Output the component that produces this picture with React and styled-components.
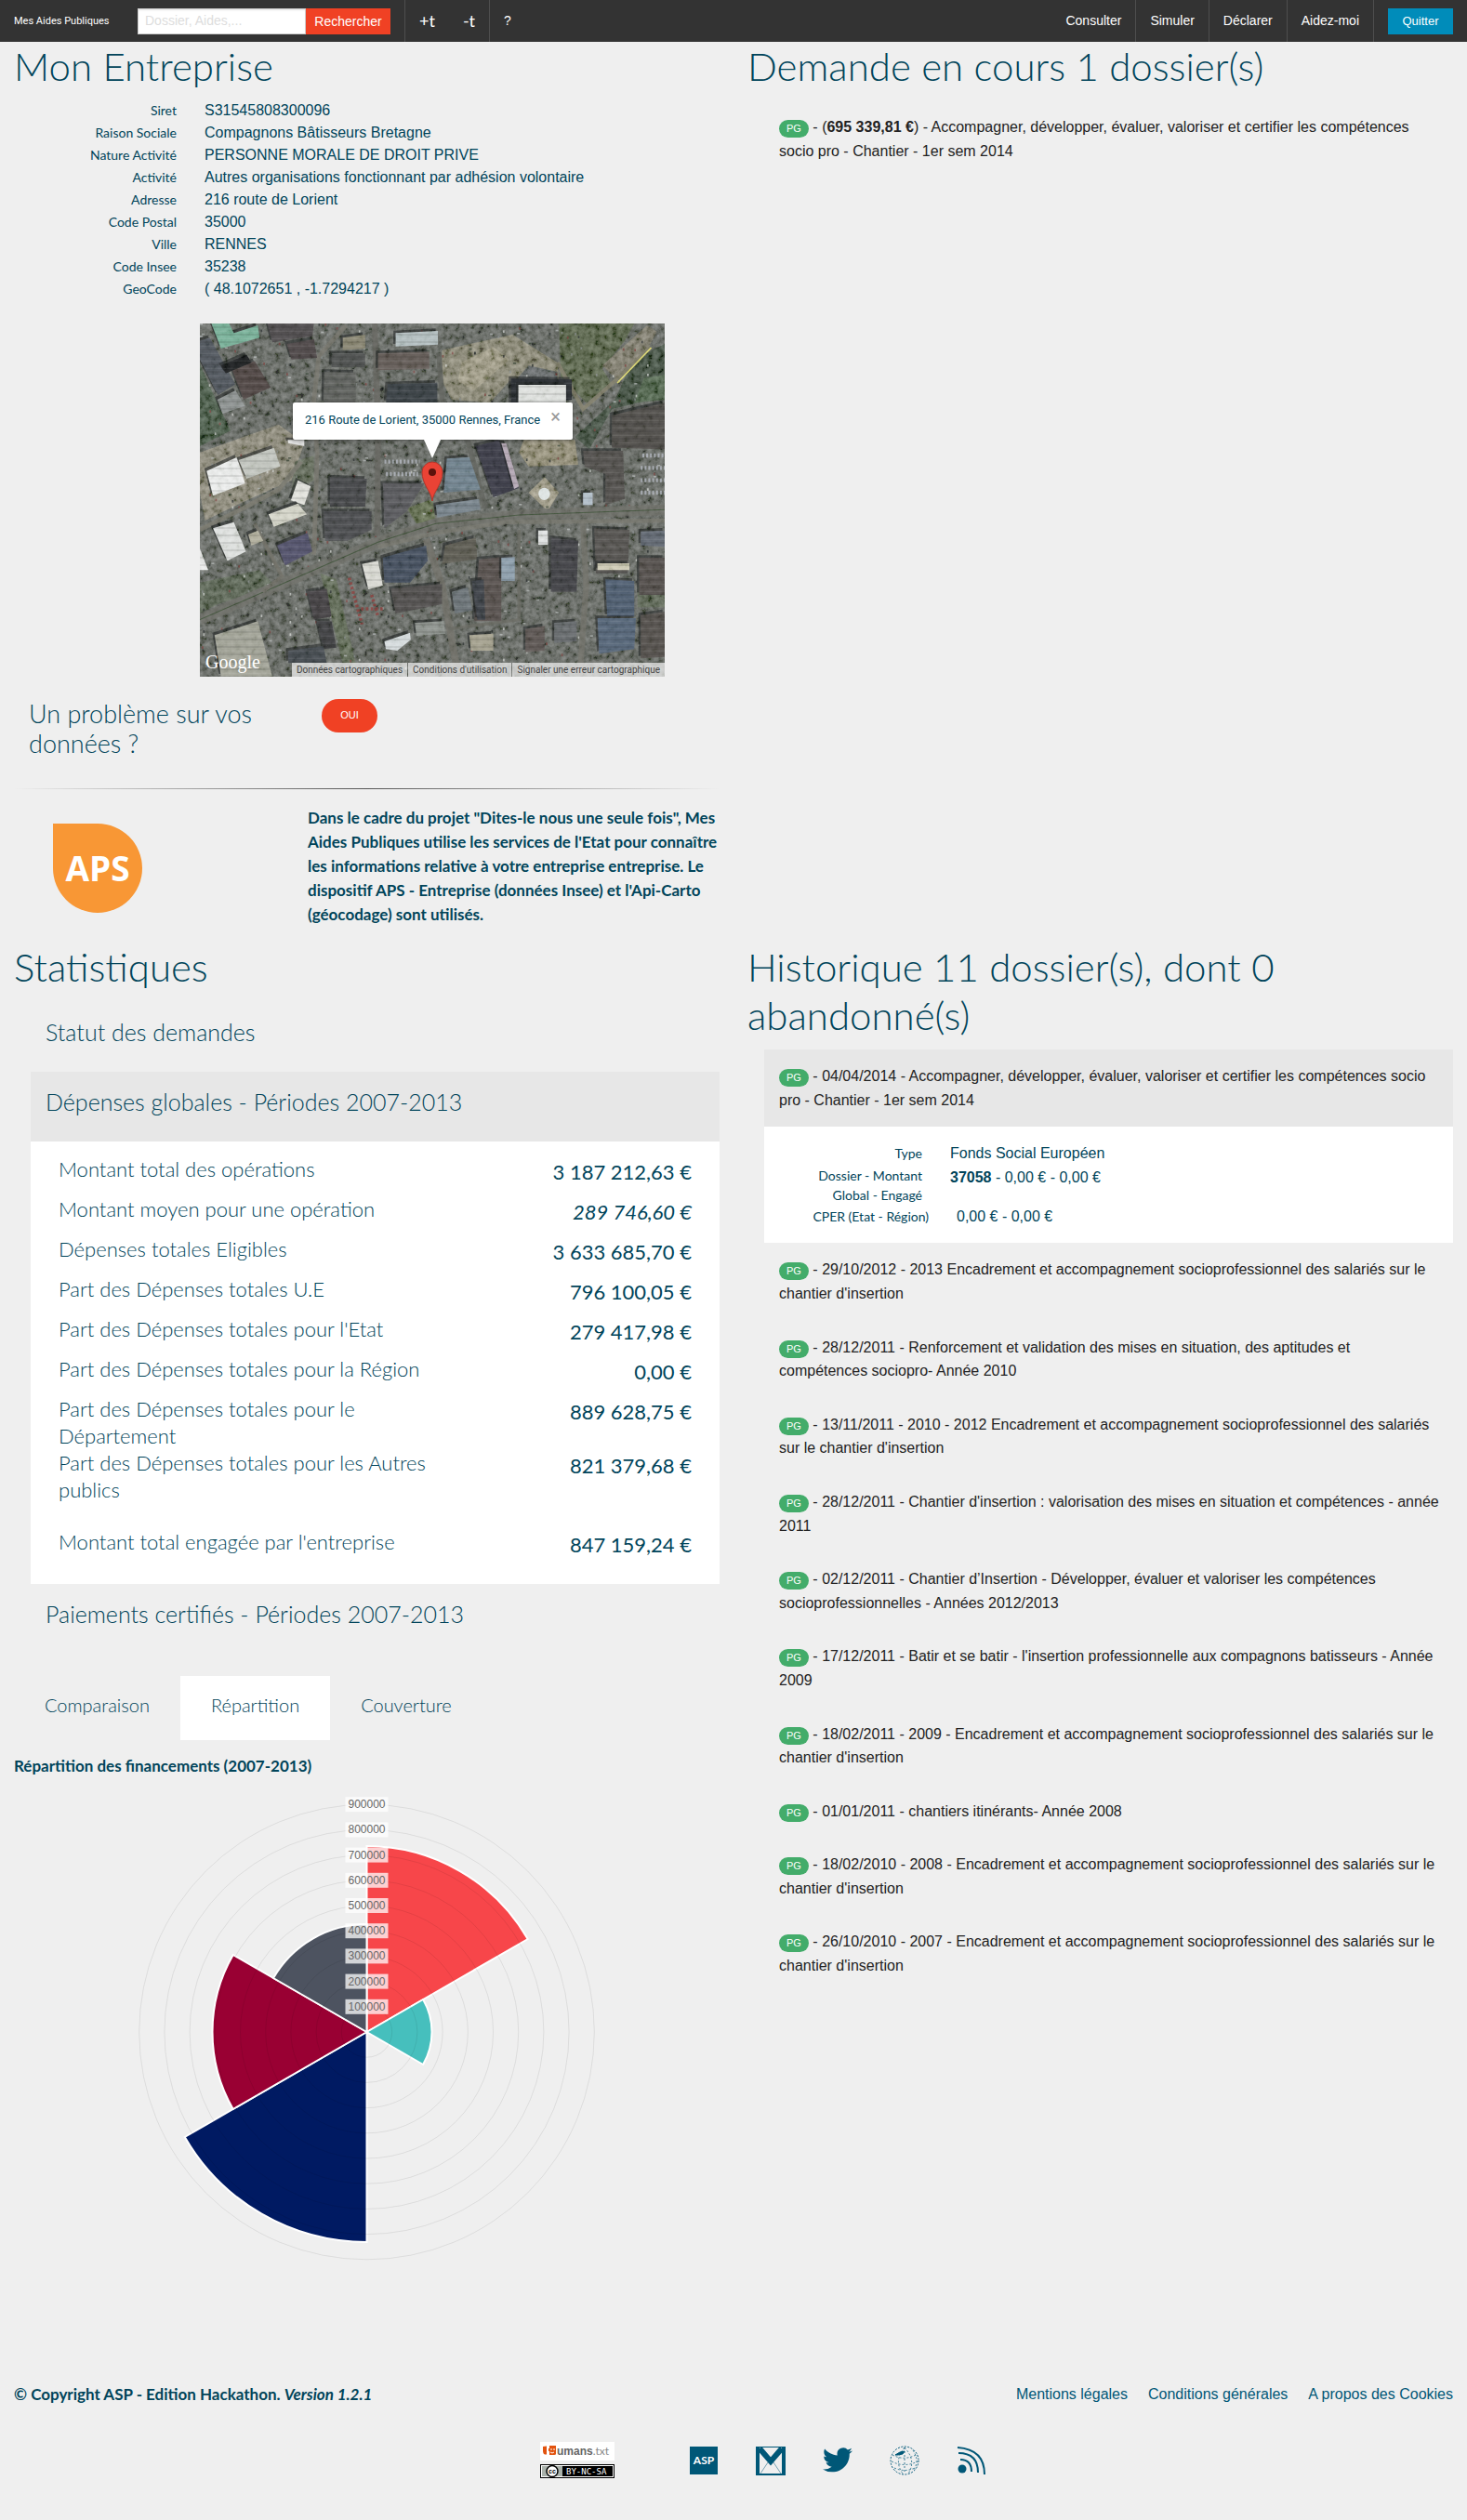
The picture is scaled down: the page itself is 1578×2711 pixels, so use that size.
import React from "react";
import styled, { createGlobalStyle, css } from "styled-components";

const ink = "#00445a";
const petrol = "#005777";
const sans = '"Liberation Sans", Arial, sans-serif';
const display = 'Lato, "Open Sans", sans-serif';

const GlobalStyle = createGlobalStyle`
  *, *::before, *::after { box-sizing: border-box; }
  body { margin: 0; background: #efefef; color: #222; font: 16px/1.6 ${sans}; }
  h2, h3, p, dl, dd, ul { margin: 0; padding: 0; }
  h2, h3 { font-weight: 300; }
  button, input { font: inherit; border: 0; border-radius: 0; }
  a { color: inherit; text-decoration: none; }
`;

/* ---------- top bar ---------- */
const TopBar = styled.header`
  display: flex; align-items: center; height: 45px; padding: 0 15px;
  background: #333; color: #fff; font-size: 12px; line-height: 45px;
`;
const Brand = styled.a`
  width: 133px; font-family: Roboto, ${sans}; font-size: 11px; white-space: nowrap;
`;
const Search = styled.form`
  display: flex; width: 272px; height: 28px; margin-right: 15px;
`;
const SearchInput = styled.input`
  flex: 1; min-width: 0; padding: 0 8px; background: #fff; font-size: 14px;
  box-shadow: inset 0 0 0 1px #ccc, inset 0 2px 2px rgba(0, 0, 0, 0.1);
  &::placeholder { color: #ddd; opacity: 1; }
`;
const SearchButton = styled.button`
  width: 91px; padding: 0; background: #f04124; color: #fff; font-size: 14px; line-height: 28px;
`;
const Nav = styled.nav`
  display: flex; height: 45px; margin-left: ${(p) => (p.$end ? "auto" : 0)};
`;
const NavGroup = styled.div`
  display: flex; border-left: ${(p) => (p.$line ? "1px solid #4e4e4e" : 0)};
`;
const NavLink = styled.a`
  padding: 0 15px; font-size: ${(p) => (p.$big ? 18 : 14)}px;
  font-family: ${(p) => (p.$big ? display : sans)};
`;
const Quit = styled.button`
  align-self: center; width: 70px; height: 28px; margin-left: 15px; padding: 0;
  background: #008cba; color: #fff; font-size: 13px; line-height: 28px;
`;

/* ---------- page ---------- */
const Columns = styled.main`
  display: grid; grid-template-columns: 1fr 1fr; align-items: start;
`;
const Section = styled.section`
  min-width: 0; padding: 0 15px 17px;
`;
const Title = styled.h2`
  padding-bottom: 3px; font-family: ${display}; font-size: 42px; line-height: 52px; color: ${ink};
`;
const Facts = styled.dl`
  display: grid; grid-template-columns: 175px 1fr; column-gap: 30px; margin-top: 7px; color: ${ink};
  line-height: 24px;
`;
const Term = styled.dt`
  text-align: right; font-family: ${display}; font-size: 14px;
`;

const MapBox = styled.figure`
  position: relative; width: 500px; height: 380px; margin: 25px 0 0 200px; overflow: hidden;
`;
const MapBubble = styled.div`
  position: absolute; left: 100px; top: 85px; width: 301px; height: 40px; padding: 0 13px;
  display: flex; justify-content: space-between; align-items: flex-start;
  background: #fff; border-radius: 2px; box-shadow: 0 1px 4px rgba(0, 0, 0, 0.4);
  color: ${ink}; font: 13px/38px Roboto, sans-serif;
  &::after {
    content: ""; position: absolute; left: 141px; top: 40px;
    border: solid transparent; border-width: 20px 9px 0; border-top-color: #fff;
  }
`;
const BubbleClose = styled.button`
  padding: 0; background: none; color: #999; font: 20px/30px Roboto, sans-serif;
`;
const MapBrand = styled.span`
  position: absolute; left: 6px; bottom: 2px; color: #fff; font: 20px/28px "Liberation Serif", serif;
`;
const MapLegal = styled.div`
  position: absolute; right: 0; bottom: 0; display: flex; gap: 1px; color: #444;
  font: 10px/15px Roboto, sans-serif;
`;
const LegalLink = styled.a`
  padding: 0 5px; background: rgba(245, 245, 245, 0.7);
`;

const Problem = styled.div`
  display: flex; align-items: flex-start; padding: 24px 16px 0; min-height: 120px;
`;
const ProblemText = styled.h3`
  width: 315px; padding: 0 60px 0 0; font-family: ${display}; font-size: 27px; line-height: 32px; color: ${ink};
`;
const Yes = styled.button`
  width: 60px; height: 36px; padding: 0; border-radius: 18px; background: #f04124; color: #fff; font-size: 11px;
`;
const Rule = styled.hr`
  height: 1px; margin: 0; border: 0;
  background: linear-gradient(to right, transparent, #555, transparent);
`;
const Notice = styled.div`
  display: grid; grid-template-columns: 96px 1fr; column-gap: 178px; padding: 18px 0 0 42px;
`;
const ApsLogo = styled.div`
  display: flex; align-items: center; justify-content: center; width: 96px; height: 96px; margin-top: 19px;
  border-radius: 0 50% 50% 50%; background: #f89735; color: #fff;
  font: 700 37px/96px "Open Sans", sans-serif;
`;
const NoticeText = styled.p`
  font-family: ${display}; font-weight: 700; font-size: 17px; line-height: 26px; color: ${ink};
`;

/* ---------- accordions ---------- */
const Accordion = styled.div`
  margin-left: 18px; margin-top: ${(p) => p.$top || 0}px;
`;
const StatHeader = styled.button`
  display: block; width: 100%; padding: 16px 16px 27px; text-align: left;
  background: ${(p) => (p.$open ? "#e7e7e7" : "transparent")};
  font-family: ${display}; font-size: 25px; line-height: 32px; font-weight: 300; color: ${ink};
`;
const StatPanel = styled.div`
  padding: 15px 30px 17px; background: #fff;
`;
const Amounts = styled.table`
  width: 100%; border-collapse: collapse; color: ${ink}; font-family: ${display}; font-weight: 300;
`;
const AmountLabel = styled.th`
  width: 420px; padding: 0; text-align: left; vertical-align: top; font-weight: 300; font-size: 22px; line-height: 29px;
`;
const AmountValue = styled.td`
  padding: 0; text-align: right; vertical-align: top; white-space: nowrap;
  font-size: 22px; line-height: 36px; font-weight: 400; font-style: ${(p) => (p.$italic ? "italic" : "normal")};
`;
const AmountRow = styled.tr`
  height: ${(p) => (p.$tall ? 58 : 43)}px;
  ${(p) => p.$last && css`
    height: 70px;
    && > * { padding-top: 27px; }
  `}
`;

const ItemHeader = styled.button`
  display: block; width: 100%; padding: 16px 13px 16px 16px; text-align: left; color: #222; line-height: 1.6;
  background: ${(p) => (p.$open ? "#e7e7e7" : "transparent")};
`;
const Badge = styled.span`
  display: inline-block; padding: 4px 8px; border-radius: 10px; background: #43ac6a; color: #fff;
  font-size: 11px; line-height: 11px;
`;
const ItemPanel = styled.div`
  padding: 16px; background: #fff; color: ${ink};
`;
const Detail = styled.dl`
  display: grid; grid-template-columns: ${(p) => (p.$wide ? 161 : 154)}px 1fr; column-gap: 30px;
`;
const DetailTerm = styled.dt`
  text-align: right; font-family: ${display}; font-size: 14px; line-height: 21px; padding: 2px 0 0 20px;
  & + dd + & { padding-top: 0; }
`;

/* ---------- tabs and chart ---------- */
const Tabs = styled.div`
  display: flex; margin-top: 24px;
`;
const Tab = styled.button`
  padding: 0 33px 7px; height: 69px; background: ${(p) => (p.$active ? "#fff" : "transparent")};
  font-family: ${display}; font-size: 20px; font-weight: 300; color: ${ink};
`;
const ChartTitle = styled.p`
  margin-top: 15px; font-family: ${display}; font-weight: 700; font-size: 17px; line-height: 26px; color: ${ink};
`;
const Chart = styled.svg`
  display: block; width: 100%; height: 520px; margin-top: 13px;
  font: 12px ${sans};
`;

/* ---------- footer ---------- */
const Footer = styled.footer`
  padding: 0 15px 45px; margin-top: 100px;
`;
const FooterLine = styled.div`
  display: flex; justify-content: space-between; color: ${ink}; line-height: 26px;
`;
const Copyright = styled.p`
  font-family: ${display}; font-weight: 700; font-size: 17px;
`;
const FooterLinks = styled.nav`
  display: flex; gap: 22px; color: ${petrol};
`;
const Marks = styled.div`
  display: flex; justify-content: center; align-items: center; margin-top: 38px; padding-left: 64px;
`;
const Licences = styled.div`
  display: flex; flex-direction: column; gap: 4px; margin-right: 80px;
`;
const Social = styled.div`
  display: flex; gap: 40px;
`;
const SvgBlock = styled.svg`
  display: block;
`;

const facts = [
  ["Siret", "S31545808300096"],
  ["Raison Sociale", "Compagnons Bâtisseurs Bretagne"],
  ["Nature Activité", "PERSONNE MORALE DE DROIT PRIVE"],
  ["Activité", "Autres organisations fonctionnant par adhésion volontaire"],
  ["Adresse", "216 route de Lorient"],
  ["Code Postal", "35000"],
  ["Ville", "RENNES"],
  ["Code Insee", "35238"],
  ["GeoCode", "( 48.1072651 , -1.7294217 )"],
];

const amounts = [
  { label: "Montant total des opérations", value: "3 187 212,63 €" },
  { label: "Montant moyen pour une opération", value: "289 746,60 €", italic: true },
  { label: "Dépenses totales Eligibles", value: "3 633 685,70 €" },
  { label: "Part des Dépenses totales U.E", value: "796 100,05 €" },
  { label: "Part des Dépenses totales pour l'Etat", value: "279 417,98 €" },
  { label: "Part des Dépenses totales pour la Région", value: "0,00 €" },
  { label: "Part des Dépenses totales pour le Département", value: "889 628,75 €", tall: true },
  { label: "Part des Dépenses totales pour les Autres publics", value: "821 379,68 €", tall: true },
  { label: "Montant total engagée par l'entreprise", value: "847 159,24 €", last: true },
];

const history = [
  "29/10/2012 - 2013 Encadrement et accompagnement socioprofessionnel des salariés sur le chantier d'insertion",
  "28/12/2011 - Renforcement et validation des mises en situation, des aptitudes et compétences sociopro- Année 2010",
  "13/11/2011 - 2010 - 2012 Encadrement et accompagnement socioprofessionnel des salariés sur le chantier d'insertion",
  "28/12/2011 - Chantier d'insertion : valorisation des mises en situation et compétences - année 2011",
  "02/12/2011 - Chantier d’Insertion - Développer, évaluer et valoriser les compétences socioprofessionnelles - Années 2012/2013",
  "17/12/2011 - Batir et se batir - l'insertion professionnelle aux compagnons batisseurs - Année 2009",
  "18/02/2011 - 2009 - Encadrement et accompagnement socioprofessionnel des salariés sur le chantier d'insertion",
  "01/01/2011 - chantiers itinérants- Année 2008",
  "18/02/2010 - 2008 - Encadrement et accompagnement socioprofessionnel des salariés sur le chantier d'insertion",
  "26/10/2010 - 2007 - Encadrement et accompagnement socioprofessionnel des salariés sur le chantier d'insertion",
];

/* Polar chart: six sectors of 60°, the third one is empty. */
const sectors = [
  { r: 200, color: "#f7464a" },
  { r: 70, color: "#46bfbd" },
  { r: 0, color: "none" },
  { r: 226, color: "#001a62" },
  { r: 166, color: "#990033" },
  { r: 116, color: "#4d5360" },
];
const point = (r, deg) => {
  const a = ((deg - 90) * Math.PI) / 180;
  return `${(r * Math.cos(a)).toFixed(2)} ${(r * Math.sin(a)).toFixed(2)}`;
};

function PolarChart() {
  const rings = [1, 2, 3, 4, 5, 6, 7, 8, 9];
  return (
    <Chart viewBox="-260 -260 520 520" role="img" aria-label="Répartition des financements">
      {sectors.map((s, i) => (
        <path
          key={i}
          d={`M0 0L${point(s.r, i * 60)}A${s.r} ${s.r} 0 0 1 ${point(s.r, i * 60 + 60)}Z`}
          fill={s.color}
          stroke="#fff"
          strokeWidth="2"
        />
      ))}
      {rings.map((n) => (
        <circle key={n} r={n * 27.2} fill="none" stroke="#000" strokeOpacity=".08" />
      ))}
      {rings.map((n) => (
        <g key={n}>
          <rect x="-23" y={-n * 27.2 - 8} width="46" height="16" fill="#fff" fillOpacity=".75" />
          <text y={-n * 27.2 + 4} textAnchor="middle" fill="#666">{n * 100000}</text>
        </g>
      ))}
    </Chart>
  );
}

/* Aerial view: [points, fill] in drawing units. */
const land = [
  ["44,185 90,290 140,400 44,450", "#28402a"],
  ["1165,54 1400,54 1370,110 1300,200 1330,250 1250,310 1170,225", "#3f4d2c"],
  ["800,140 1020,90 1160,180 1165,240 1010,240 950,310 830,300 795,230", "#86806a"],
  ["860,180 960,130 1010,170 900,270 850,240", "#a39a80"],
  ["1395,170 1495,120 1495,290 1330,330 1260,460 1215,420 1340,300", "#1d2f1f"],
  ["1430,230 1495,220 1495,300 1400,310", "#2e4a2b"],
  ["1055,430 1215,430 1225,510 1070,515 1040,470", "#93896d"],
  ["1300,190 1440,60 1470,80 1440,140 1345,235", "#77705f"],
  ["1070,600 1120,550 1165,600 1130,660", "#a39a82"],
  ["44,470 290,380 370,440 330,560 200,620 60,690 44,600", "#8a8371"],
  ["420,860 470,880 530,1150 490,1150", "#46533a"],
  ["1410,900 1495,900 1495,970 1410,970", "#3f4b36"],
  ["340,500 400,480 400,560 330,600", "#4a5440"],
  ["690,650 770,620 780,690 720,700", "#4c5a33"],
  ["44,890 230,850 280,900 100,960 44,990", "#3d4a36"],
  ["1070,190 1160,210 1160,240 1010,260", "#50545a"],
];
const buildings = [
  ["80,54 110,135 230,100 225,60 150,85 135,54", "#78b59c"],
  ["44,110 75,100 155,250 100,285 44,170", "#4d535c"],
  ["255,54 400,54 395,95 270,115", "#4b474a"],
  ["315,120 400,105 410,165 330,170", "#4a4244"],
  ["145,205 215,175 265,260 180,300", "#4c4140"],
  ["98,300 155,270 185,320 115,345", "#8f9494"],
  ["110,190 190,155 205,180 125,215", "#15171a"],
  ["490,100 560,90 560,135 490,140", "#8a8672"],
  ["655,85 787,78 787,122 655,128", "#b8c4c7"],
  ["455,150 560,150 560,195 455,195", "#4a4c4c"],
  ["600,150 760,145 760,200 600,205", "#5f5652"],
  ["432,210 530,212 530,310 430,310", "#5b5d5a"],
  ["630,250 785,245 785,310 625,310", "#333a40"],
  ["1015,232 1205,235 1205,300 1015,330", "#20242a"],
  ["1038,252 1187,252 1187,320 1038,320", "#e6e8e6"],
  ["65,530 160,485 185,570 85,610", "#f4f5f5"],
  ["165,495 275,455 295,515 190,555", "#c8cbc5"],
  ["318,430 370,430 370,450 320,440", "#e8e8e8"],
  ["350,560 390,580 370,640 328,625", "#e9e9e4"],
  ["258,670 350,635 378,670 275,710", "#dcdcd0"],
  ["85,715 150,695 188,790 130,820", "#e7e9e8"],
  ["44,780 70,850 44,850", "#f2f2f2"],
  ["285,770 380,730 395,790 310,835", "#4e4d6a"],
  ["195,735 225,722 242,755 205,770", "#b9b6a4"],
  ["450,550 565,555 560,645 450,645", "#414246"],
  ["430,660 580,660 580,720 505,755 435,755", "#47484c"],
  ["615,570 745,570 690,660 620,715", "#55555a"],
  ["815,490 885,485 920,590 805,600", "#6f8290"],
  ["780,640 915,620 920,655 785,680", "#77838d"],
  ["905,450 980,430 1040,585 960,615", "#353543"],
  ["985,440 1000,440 1040,580 1025,588", "#b9abba"],
  ["1330,350 1495,310 1495,460 1330,455", "#4b4845"],
  ["1240,465 1365,465 1370,620 1310,640 1310,540 1245,515", "#4f4c4a"],
  ["1240,600 1270,600 1270,640 1240,640", "#b6c3d0"],
  ["550,830 600,820 615,900 570,912", "#e2e2dc"],
  ["615,810 750,770 755,820 700,890 620,890", "#3f4a5c"],
  ["810,770 905,745 910,815 800,830", "#5a584f"],
  ["915,815 985,808 985,1015 900,1015", "#544c4a"],
  ["985,810 1027,808 1027,885 985,885", "#8ea0b0"],
  ["893,885 930,880 935,1010 910,1010", "#383c44"],
  ["1100,722 1130,722 1130,768 1100,768", "#e8eaea"],
  ["1140,745 1225,755 1220,920 1140,920", "#3c3c42"],
  ["1275,715 1385,720 1380,860 1280,860", "#514e4c"],
  ["1285,828 1385,828 1385,850 1285,850", "#d6d2bc"],
  ["1415,810 1495,810 1495,930 1415,930", "#514b49"],
  ["1420,725 1495,722 1495,775 1420,770", "#5f6672"],
  ["1310,880 1400,885 1400,1000 1315,1000", "#4a5a70"],
  ["1285,1005 1405,1005 1400,1105 1290,1120", "#516278"],
  ["640,910 800,895 800,960 655,990", "#4d4a4a"],
  ["830,920 880,905 895,980 840,990", "#6a7278"],
  ["715,1020 805,1015 810,1055 720,1062", "#8f9490"],
  ["620,1080 700,1052 702,1075 660,1110 625,1105", "#dde3e6"],
  ["90,1060 225,1015 270,1193 110,1193", "#a5a69a"],
  ["380,920 440,910 455,1000 400,1010", "#403c40"],
  ["410,1015 455,1015 470,1100 430,1105", "#3a3a3e"],
  ["320,1110 430,1095 440,1150 320,1150", "#3f454c"],
  ["1150,1020 1220,1015 1220,1080 1150,1085", "#666a6e"],
  ["1060,1040 1120,1030 1120,1110 1060,1115", "#5a5250"],
  ["885,1060 960,1055 960,1110 890,1110", "#a8a491"],
  ["1420,995 1495,985 1495,1130 1420,1135", "#504b48"],
];
const roads = [
  ["M44 1010L300 895L600 760L780 700L1040 672L1495 655", 34, "#6b6c66"],
  ["M44 1010L300 895L600 760L780 700L1040 672L1495 655", 3, "#3d4f37"],
  ["M600 775L780 730L1000 695L1495 690", 14, "#73736b"],
  ["M590 54L600 400L598 740", 18, "#63635e"],
  ["M500 60L415 160L400 300L410 480L400 800", 14, "#73726a"],
  ["M790 150L800 300L880 430L935 650", 16, "#5e605b"],
  ["M750 750L800 900L850 1190", 22, "#6d6c65"],
  ["M1240 700L1250 900L1230 1190", 18, "#6d6d66"],
  ["M44 720L180 650L290 590L360 500", 14, "#77766c"],
  ["M1160 180L1240 330L1345 235L1450 130", 12, "#7f7c69"],
  ["M215 700L300 870L240 920", 12, "#6e6d65"],
  ["M1040 720L1040 1010L820 1040", 10, "#65665f"],
];
const cars = Array.from({ length: 620 }, (_, i) => {
  const x = 44 + ((i * 389 + i * i * 17) % 1440);
  const y = 54 + ((i * 233 + i * i * 29) % 1130);
  return [x, y, ["#b9bdbe", "#1b2022", "#8b9092", "#2c3a2b", "#d6d8d6", "#7d3b38"][(i * 7) % 6]];
});

function Aerial() {
  return (
    <SvgBlock width="500" height="380" viewBox="0 0 500 380" aria-hidden="true">
      <defs>
        <filter id="grain" x="0" y="0" width="100%" height="100%">
          <feTurbulence type="fractalNoise" baseFrequency="0.16" numOctaves="4" seed="8" />
          <feColorMatrix values="1.2 0 0 0 -0.26  1.2 0 0 0 -0.24  1.2 0 0 0 -0.28  0 0 0 0 1" />
        </filter>
        <pattern id="ribs" width="30" height="24" patternUnits="userSpaceOnUse">
          <path d="M0 7H30" stroke="#fff" strokeOpacity=".08" strokeWidth="4" />
          <path d="M0 18H30" stroke="#000" strokeOpacity=".14" strokeWidth="4" />
        </pattern>
      </defs>
      <rect width="500" height="380" fill="#505350" />
      <g transform="scale(.3446 .3333) translate(-44 -54)">
        {land.map(([p, f]) => <polygon key={p} points={p} fill={f} />)}
      </g>
      <rect width="500" height="380" filter="url(#grain)" opacity=".3" />
      <g transform="scale(.3446 .3333) translate(-44 -54)">
        {cars.map(([x, y, f], i) => <rect key={i} x={x} y={y} width={i % 3 ? 5 : 9} height={i % 3 ? 8 : 5} fill={f} opacity=".75" />)}
        {roads.map(([d, w, c], i) => <path key={i} d={d} fill="none" stroke={c} strokeWidth={w} />)}
        {buildings.map(([p, f]) => (
          <g key={p}>
            <polygon points={p} fill="#101416" opacity=".6" transform="translate(-7 -8)" />
            <polygon points={p} fill={f} />
            <polygon points={p} fill="url(#ribs)" />
          </g>
        ))}
        <path d="M1347 246L1453 132" stroke="#e5df72" strokeWidth="5" />
        <ellipse cx="1119" cy="604" rx="18" ry="20" fill="#e7eded" />
        <path d="M615 975h-70M510 875l40 150M580 930l20 70" stroke="#863f3d" strokeWidth="10" strokeDasharray="8 7" fill="none" />
        <path d="M1425 480h70M1420 520h75M1420 560h75M1420 600h75M620 500h110M625 540h100" stroke="#a7abb3" strokeWidth="13" strokeDasharray="6 6" fill="none" />
      </g>
      <rect width="500" height="380" filter="url(#grain)" opacity=".12" />
      <path d="M250 191c-1-10-11-18-11-31a11 11 0 0 1 22 0c0 13-10 21-11 31Z" fill="#ea4335" stroke="#b3362b" />
      <circle cx="250" cy="160" r="4" fill="#5c120c" />
    </SvgBlock>
  );
}

function Item({ open, children }) {
  return (
    <ItemHeader type="button" $open={open} aria-expanded={!!open}>
      <Badge>PG</Badge> - {children}
    </ItemHeader>
  );
}

export default function App() {
  return (
    <>
      <GlobalStyle />
      <TopBar>
        <Brand href="#">Mes Aides Publiques</Brand>
        <Search onSubmit={(e) => e.preventDefault()}>
          <SearchInput type="text" aria-label="Recherche" placeholder="Dossier, Aides,..." />
          <SearchButton type="submit">Rechercher</SearchButton>
        </Search>
        <Nav>
          <NavGroup $line>
            <NavLink href="#" $big>+t</NavLink>
            <NavLink href="#" $big>-t</NavLink>
          </NavGroup>
          <NavGroup $line><NavLink href="#">?</NavLink></NavGroup>
        </Nav>
        <Nav $end>
          <NavGroup><NavLink href="#">Consulter</NavLink></NavGroup>
          <NavGroup $line><NavLink href="#">Simuler</NavLink></NavGroup>
          <NavGroup $line><NavLink href="#">Déclarer</NavLink></NavGroup>
          <NavGroup $line><NavLink href="#">Aidez-moi</NavLink></NavGroup>
          <NavGroup $line><Quit type="button">Quitter</Quit></NavGroup>
        </Nav>
      </TopBar>

      <Columns>
        <Section>
          <Title>Mon Entreprise</Title>
          <Facts>
            {facts.map(([k, v]) => (
              <React.Fragment key={k}>
                <Term>{k}</Term>
                <dd>{v}</dd>
              </React.Fragment>
            ))}
          </Facts>
          <MapBox>
            <Aerial />
            <MapBubble>
              216 Route de Lorient, 35000 Rennes, France
              <BubbleClose type="button" aria-label="Fermer">×</BubbleClose>
            </MapBubble>
            <MapBrand>Google</MapBrand>
            <MapLegal>
              <LegalLink href="#">Données cartographiques</LegalLink>
              <LegalLink href="#">Conditions d'utilisation</LegalLink>
              <LegalLink href="#">Signaler une erreur cartographique</LegalLink>
            </MapLegal>
          </MapBox>
          <Problem>
            <ProblemText>Un problème sur vos données ?</ProblemText>
            <Yes type="button">OUI</Yes>
          </Problem>
          <Rule />
          <Notice>
            <ApsLogo>APS</ApsLogo>
            <NoticeText>
              Dans le cadre du projet "Dites-le nous une seule fois", Mes Aides Publiques utilise les services de
              l'Etat pour connaître les informations relative à votre entreprise entreprise. Le dispositif APS -
              Entreprise (données Insee) et l'Api-Carto (géocodage) sont utilisés.
            </NoticeText>
          </Notice>
        </Section>

        <Section>
          <Title>Demande en cours 1 dossier(s)</Title>
          <Accordion $top={8}>
            <Item>
              (<b>695 339,81 €</b>) - Accompagner, développer, évaluer, valoriser et certifier les compétences
              socio pro - Chantier - 1er sem 2014
            </Item>
          </Accordion>
        </Section>

        <Section>
          <Title>Statistiques</Title>
          <Accordion $top={9}>
            <StatHeader type="button">Statut des demandes</StatHeader>
            <StatHeader type="button" $open aria-expanded="true">Dépenses globales - Périodes 2007-2013</StatHeader>
            <StatPanel>
              <Amounts>
                <tbody>
                  {amounts.map((a) => (
                    <AmountRow key={a.label} $tall={a.tall} $last={a.last}>
                      <AmountLabel scope="row">{a.label}</AmountLabel>
                      <AmountValue $italic={a.italic}>{a.value}</AmountValue>
                    </AmountRow>
                  ))}
                </tbody>
              </Amounts>
            </StatPanel>
            <StatHeader type="button">Paiements certifiés - Périodes 2007-2013</StatHeader>
          </Accordion>
          <Tabs role="tablist">
            <Tab type="button" role="tab">Comparaison</Tab>
            <Tab type="button" role="tab" $active aria-selected="true">Répartition</Tab>
            <Tab type="button" role="tab">Couverture</Tab>
          </Tabs>
          <ChartTitle>Répartition des financements (2007-2013)</ChartTitle>
          <PolarChart />
        </Section>

        <Section>
          <Title>Historique 11 dossier(s), dont 0 abandonné(s)</Title>
          <Accordion $top={8}>
            <Item open>
              04/04/2014 - Accompagner, développer, évaluer, valoriser et certifier les compétences socio pro -
              Chantier - 1er sem 2014
            </Item>
            <ItemPanel>
              <Detail>
                <DetailTerm>Type</DetailTerm>
                <dd>Fonds Social Européen</dd>
                <DetailTerm>Dossier - Montant Global - Engagé</DetailTerm>
                <dd><b>37058</b> - 0,00 € - 0,00 €</dd>
              </Detail>
              <Detail $wide>
                <DetailTerm>CPER (Etat - Région)</DetailTerm>
                <dd>0,00 € - 0,00 €</dd>
              </Detail>
            </ItemPanel>
            {history.map((h) => <Item key={h}>{h}</Item>)}
          </Accordion>
        </Section>
      </Columns>

      <Footer>
        <FooterLine>
          <Copyright>© Copyright ASP - Edition Hackathon. <em>Version 1.2.1</em></Copyright>
          <FooterLinks>
            <a href="#">Mentions légales</a>
            <a href="#">Conditions générales</a>
            <a href="#">A propos des Cookies</a>
          </FooterLinks>
        </FooterLine>
        <Marks>
          <Licences>
            <SvgBlock width="80" height="20" viewBox="0 0 80 20" role="img" aria-label="humans.txt">
              <rect width="80" height="20" fill="#fff" />
              <path d="M3 5l4-.5v9H5Q3 13 3 9Z" fill="#e2530f" />
              <path d="M10 4h7v9q0 1-2 1h-5v-4h-1V7h1Z" fill="#e2530f" />
              <path d="M11 8h2M14 8h2M11 11q2 2 4 0" stroke="#fff" fill="none" />
              <text x="18" y="14" fontFamily="Lato, sans-serif" fontSize="12" fill="#888">
                <tspan fontFamily={sans} fontWeight="700" fill="#666">umans</tspan>.txt
              </text>
            </SvgBlock>
            <SvgBlock width="80" height="15" viewBox="0 0 80 15" role="img" aria-label="Creative Commons BY-NC-SA">
              <rect width="80" height="15" fill="#000" />
              <rect x="1.5" y="1.5" width="77" height="12" fill="none" stroke="#fff" />
              <rect x="2" y="2" width="22" height="11" fill="#aab2ab" />
              <circle cx="13" cy="7.5" r="6" fill="#fff" stroke="#000" strokeWidth="1.5" />
              <text x="13" y="10" textAnchor="middle" fontFamily={sans} fontWeight="700" fontSize="7" fill="#000">cc</text>
              <text x="28" y="11" fontFamily='"DejaVu Sans Mono", monospace' fontSize="9" fill="#fff">BY-NC-SA</text>
            </SvgBlock>
          </Licences>
          <Social>
            <a href="#" aria-label="ASP">
              <SvgBlock width="32" height="32" viewBox="0 0 32 32">
                <rect x="1" y="1" width="30" height="30" fill={petrol} />
                <text x="16" y="20" textAnchor="middle" fontFamily="Lato, sans-serif" fontWeight="700" fontSize="12" fill="#fff">ASP</text>
              </SvgBlock>
            </a>
            <a href="#" aria-label="Courriel">
              <SvgBlock width="32" height="32" viewBox="0 0 32 32" fill="none" stroke={petrol}>
                <rect y="1" width="32" height="31" fill={petrol} stroke="none" />
                <rect x="4" y="2" width="24" height="28" fill="#efefef" stroke="none" />
                <path d="M4 3L16 17L28 3" strokeWidth="6" />
                <path d="M5 30L13 18M27 30L19 18" opacity=".5" />
              </SvgBlock>
            </a>
            <a href="#" aria-label="Twitter">
              <SvgBlock width="32" height="32" viewBox="0 1 24 23">
                <path fill={petrol} d="M23.950 4.570a10 10 0 0 1-2.820.775 4.960 4.960 0 0 0 2.160-2.723c-.95.555-2 .96-3.130 1.184a4.920 4.920 0 0 0-8.380 4.482C7.690 8.095 4.070 6.130 1.640 3.162a4.820 4.820 0 0 0-.666 2.475c0 1.710.87 3.213 2.190 4.096a4.900 4.900 0 0 1-2.230-.616v.06a4.920 4.920 0 0 0 3.950 4.827 5 5 0 0 1-2.210.085 4.940 4.940 0 0 0 4.600 3.417 9.870 9.870 0 0 1-6.100 2.105c-.39 0-.78-.023-1.170-.067a14 14 0 0 0 7.560 2.209c9.050 0 14-7.496 14-13.985 0-.21 0-.42-.015-.63a9.900 9.900 0 0 0 2.460-2.548Z" />
              </SvgBlock>
            </a>
            <a href="#" aria-label="Wiki">
              <SvgBlock width="32" height="32" viewBox="0 0 32 32" fill="none" stroke={petrol}>
                <circle cx="16" cy="16" r="15" strokeDasharray="2 1.500" />
                <path d="M16 2v28M3 10q13 7 27-1M2 17q14 7 28 0M5 24q11 5 22 0M16 2Q4 16 14 30M16 2q13 14 4 28M25 5q8 12 0 22" strokeDasharray="2 2" opacity=".75" />
                <path d="M6 10l5-3 5-1-2 3-5 1Z" fill={petrol} />
              </SvgBlock>
            </a>
            <a href="#" aria-label="Flux RSS">
              <SvgBlock width="32" height="32" viewBox="0 0 32 32" fill="none" stroke={petrol} strokeWidth="2">
                <circle cx="6" cy="25" r="4.500" fill={petrol} stroke="none" />
                <path d="M4 15q12 0 12 13M2 8q21 0 21 21M1 2q29 2 29 29" />
              </SvgBlock>
            </a>
          </Social>
        </Marks>
      </Footer>
    </>
  );
}
